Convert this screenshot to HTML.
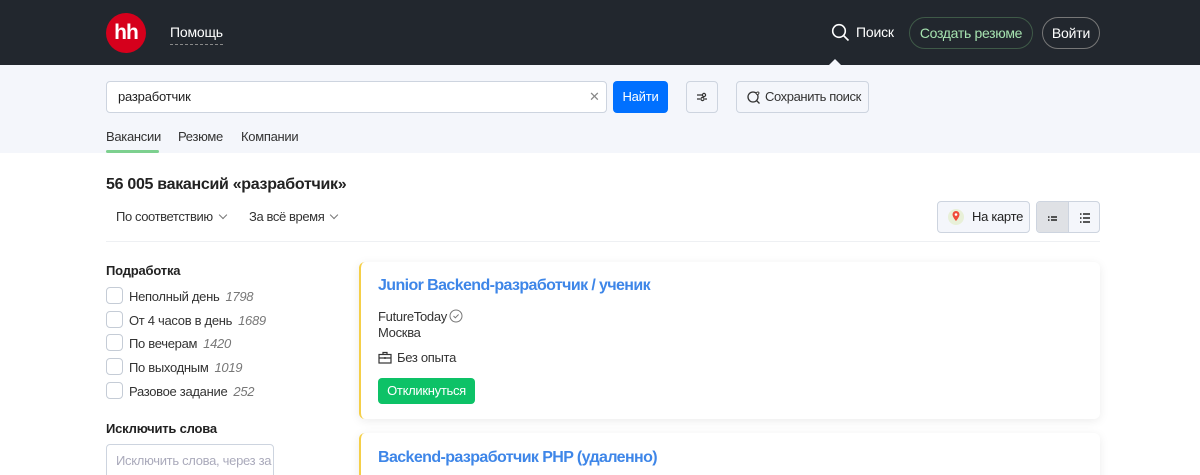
<!DOCTYPE html>
<html><head><meta charset="utf-8"><style>
*{box-sizing:border-box;margin:0;padding:0}
html,body{width:1200px;height:475px;overflow:hidden}
body{background:#fff;font-family:"Liberation Sans",sans-serif;color:#222;position:relative}
.abs{position:absolute}
.hdr{left:0;top:0;width:1200px;height:65px;background:#22272e}
.logo{left:106px;top:13px;width:40px;height:40px;border-radius:50%;background:#d6001c;color:#fff;font-weight:bold;font-size:21px;text-align:center;line-height:39px;letter-spacing:-1px}
.help{left:170px;top:24px;color:#fff;font-size:14px;border-bottom:1px dashed #888;padding-bottom:4px;letter-spacing:-.2px}
.srch{left:856px;top:24px;color:#fff;font-size:14px;letter-spacing:-.2px}
.btn1{left:909px;top:17px;width:124px;height:32px;border:1px solid #3f5a48;border-radius:16px;color:#a6e3b0;font-size:14px;text-align:center;line-height:30px;letter-spacing:-.3px}
.btn2{left:1042px;top:17px;width:58px;height:32px;border:1px solid #777;border-radius:16px;color:#fff;font-size:14px;text-align:center;line-height:30px;letter-spacing:-.2px}
.tri{left:828px;top:59px;width:0;height:0;border-left:7px solid transparent;border-right:7px solid transparent;border-bottom:7px solid #f4f6fb}
.band{left:0;top:65px;width:1200px;height:88px;background:#f4f6fb}
.inp{left:106px;top:81px;width:501px;height:32px;background:#fff;border:1px solid #cdd4df;border-radius:4px;font-size:13px;padding-left:11px;line-height:30px;letter-spacing:-.2px}
.x{left:589px;top:89px;color:#888;font-size:13px}
.find{left:613px;top:81px;width:55px;height:32px;background:#0070ff;color:#fff;border-radius:4px;font-size:13px;text-align:center;line-height:32px;letter-spacing:-.2px}
.fb{left:686px;top:81px;width:32px;height:32px;border:1px solid #cdd4df;border-radius:4px;background:#f4f6fb}
.save{left:736px;top:81px;width:133px;height:32px;border:1px solid #cdd4df;border-radius:4px;font-size:13px;line-height:30px;padding-left:28px;color:#333;letter-spacing:-.4px;white-space:nowrap}
.tab{top:129px;font-size:13px;color:#333;letter-spacing:-.3px}
.ul{left:106px;top:150px;width:53px;height:3px;background:#7dd08f;border-radius:2px}
h1{position:absolute;left:106px;top:176px;font-size:16px;font-weight:bold;color:#222;letter-spacing:-.3px}
.sort{top:209px;font-size:13px;color:#333;letter-spacing:-.4px}
.chev{display:inline-block;width:6px;height:6px;border-right:1.3px solid #777;border-bottom:1.3px solid #777;transform:rotate(45deg);margin-left:7px;position:relative;top:-3px}
.map{left:937px;top:201px;width:93px;height:32px;border:1px solid #cdd4df;border-radius:4px;background:#f4f6fb;font-size:13px;line-height:30px;padding-left:34px;letter-spacing:-.3px}
.vw{left:1036px;top:201px;width:64px;height:32px;border:1px solid #cdd4df;border-radius:4px;background:#f4f6fb;overflow:hidden}
.hr{left:106px;top:241px;width:994px;height:1px;background:#eef0f3}
.fh{left:106px;font-size:13px;font-weight:bold;letter-spacing:-.2px}
.cb{left:106px;width:17px;height:17px;border:1px solid #c5ccd6;border-radius:4px}
.cl{left:129px;font-size:13px;color:#333;letter-spacing:-.3px}
.cl i{color:#777;margin-left:6px}
.ex{left:106px;top:444px;width:168px;height:40px;border:1px solid #cdd4df;border-radius:4px;font-size:13px;color:#aab;padding:8px 9px;white-space:nowrap;overflow:hidden;letter-spacing:-.3px}
.card{left:359px;width:741px;background:#fff;border-left:2px solid #f5cf48;border-radius:6px;box-shadow:0 2px 10px rgba(0,0,0,.08)}
.ttl{left:378px;font-size:16px;font-weight:bold;color:#3e86e8;letter-spacing:-.6px}
.t13{left:378px;font-size:13px;color:#333;letter-spacing:-.3px}
.resp{left:378px;top:378px;width:97px;height:26px;background:#0dc267;border-radius:4px;color:#fff;font-size:13px;text-align:center;line-height:26px;letter-spacing:-.3px}
</style></head><body>
<div class="abs hdr"></div>
<div class="abs logo">hh</div>
<div class="abs help">Помощь</div>
<svg class="abs" style="left:831px;top:23px" width="19" height="19" viewBox="0 0 19 19"><circle cx="8" cy="8" r="6.3" fill="none" stroke="#fff" stroke-width="1.6"/><path d="M12.5 12.5l5 5" stroke="#fff" stroke-width="1.6"/></svg>
<div class="abs srch">Поиск</div>
<div class="abs btn1">Создать резюме</div>
<div class="abs btn2">Войти</div>
<div class="abs band"></div>
<div class="abs tri"></div>
<div class="abs inp">разработчик</div>
<div class="abs x">✕</div>
<div class="abs find">Найти</div>
<div class="abs fb"><svg width="30" height="30" viewBox="0 0 30 30"><path d="M10 13h5M10 17h3M18 17h2" stroke="#333" stroke-width="1.3"/><circle cx="17" cy="13" r="1.6" fill="none" stroke="#333" stroke-width="1.2"/><circle cx="15.5" cy="17" r="1.6" fill="none" stroke="#333" stroke-width="1.2"/></svg></div>
<div class="abs save">Сохранить поиск</div>
<svg class="abs" style="left:746px;top:89px" width="16" height="16" viewBox="0 0 16 16"><circle cx="7" cy="8" r="5" fill="none" stroke="#333" stroke-width="1.3"/><path d="M10.5 11.5l3 3" stroke="#333" stroke-width="1.3"/><path d="M11 3.5c.6-.8 2-.6 2 .5 0 .8-1 1.4-1.5 2-.5-.6-1.5-1.2-1.5-2 0-.4.4-.8 1-.5" fill="#fff" stroke="#333" stroke-width="1"/></svg>
<div class="abs tab" style="left:106px">Вакансии</div>
<div class="abs tab" style="left:178px">Резюме</div>
<div class="abs tab" style="left:241px">Компании</div>
<div class="abs ul"></div>
<h1>56 005 вакансий «разработчик»</h1>
<div class="abs sort" style="left:116px">По соответствию<span class="chev"></span></div>
<div class="abs sort" style="left:249px">За всё время<span class="chev"></span></div>
<div class="abs map">На карте</div>
<svg class="abs" style="left:947px;top:208px" width="18" height="18" viewBox="0 0 18 18"><circle cx="9" cy="9" r="8" fill="#e8f0d8"/><path d="M9 3a3.5 3.5 0 0 1 3.5 3.5C12.5 9 9 13 9 13S5.5 9 5.5 6.5A3.5 3.5 0 0 1 9 3z" fill="#f04b3a"/><circle cx="9" cy="6.5" r="1.3" fill="#fff"/></svg>
<div class="abs vw"><div style="position:absolute;left:0;top:0;width:32px;height:32px;background:#dfe1e5;border-right:1px solid #cdd4df"></div>
<svg style="position:absolute;left:8px;top:8px" width="16" height="16" viewBox="0 0 16 16"><path d="M6 7h6M6 10h6" stroke="#222" stroke-width="1.5"/><rect x="3" y="6.3" width="1.5" height="1.5" fill="#222"/><rect x="3" y="9.3" width="1.5" height="1.5" fill="#222"/></svg>
<svg style="position:absolute;left:40px;top:8px" width="16" height="16" viewBox="0 0 16 16"><path d="M6 4h7M6 8h7M6 12h7" stroke="#222" stroke-width="1.5"/><rect x="3" y="3.3" width="1.5" height="1.5" fill="#222"/><rect x="3" y="7.3" width="1.5" height="1.5" fill="#222"/><rect x="3" y="11.3" width="1.5" height="1.5" fill="#222"/></svg></div>
<div class="abs hr"></div>
<div class="abs fh" style="top:263px">Подработка</div>
<div class="abs cb" style="top:287px"></div><div class="abs cl" style="top:289px">Неполный день<i>1798</i></div>
<div class="abs cb" style="top:311px"></div><div class="abs cl" style="top:313px">От 4 часов в день<i>1689</i></div>
<div class="abs cb" style="top:334px"></div><div class="abs cl" style="top:336px">По вечерам<i>1420</i></div>
<div class="abs cb" style="top:358px"></div><div class="abs cl" style="top:360px">По выходным<i>1019</i></div>
<div class="abs cb" style="top:382px"></div><div class="abs cl" style="top:384px">Разовое задание<i>252</i></div>
<div class="abs fh" style="top:421px">Исключить слова</div>
<div class="abs ex">Исключить слова, через за</div>
<div class="abs card" style="top:262px;height:157px"></div>
<div class="abs ttl" style="top:277px">Junior Backend-разработчик / ученик</div>
<div class="abs t13" style="top:309px">FutureToday</div>
<svg class="abs" style="left:449px;top:309px" width="14" height="14" viewBox="0 0 14 14"><circle cx="7" cy="7" r="6" fill="none" stroke="#777" stroke-width="1"/><path d="M4.5 7l1.8 1.8 3.3-3.3" fill="none" stroke="#777" stroke-width="1"/></svg>
<div class="abs t13" style="top:325px">Москва</div>
<svg class="abs" style="left:378px;top:351px" width="14" height="13" viewBox="0 0 14 13"><rect x="1" y="3.5" width="12" height="8.5" fill="none" stroke="#333" stroke-width="1.2"/><path d="M5 3.5V1.5h4v2M1 7h12M7 6v2" stroke="#333" stroke-width="1.2" fill="none"/></svg>
<div class="abs t13" style="left:397px;top:350px">Без опыта</div>
<div class="abs resp">Откликнуться</div>
<div class="abs card" style="top:433px;height:60px"></div>
<div class="abs ttl" style="top:449px">Backend-разработчик PHP (удаленно)</div>
</body></html>
